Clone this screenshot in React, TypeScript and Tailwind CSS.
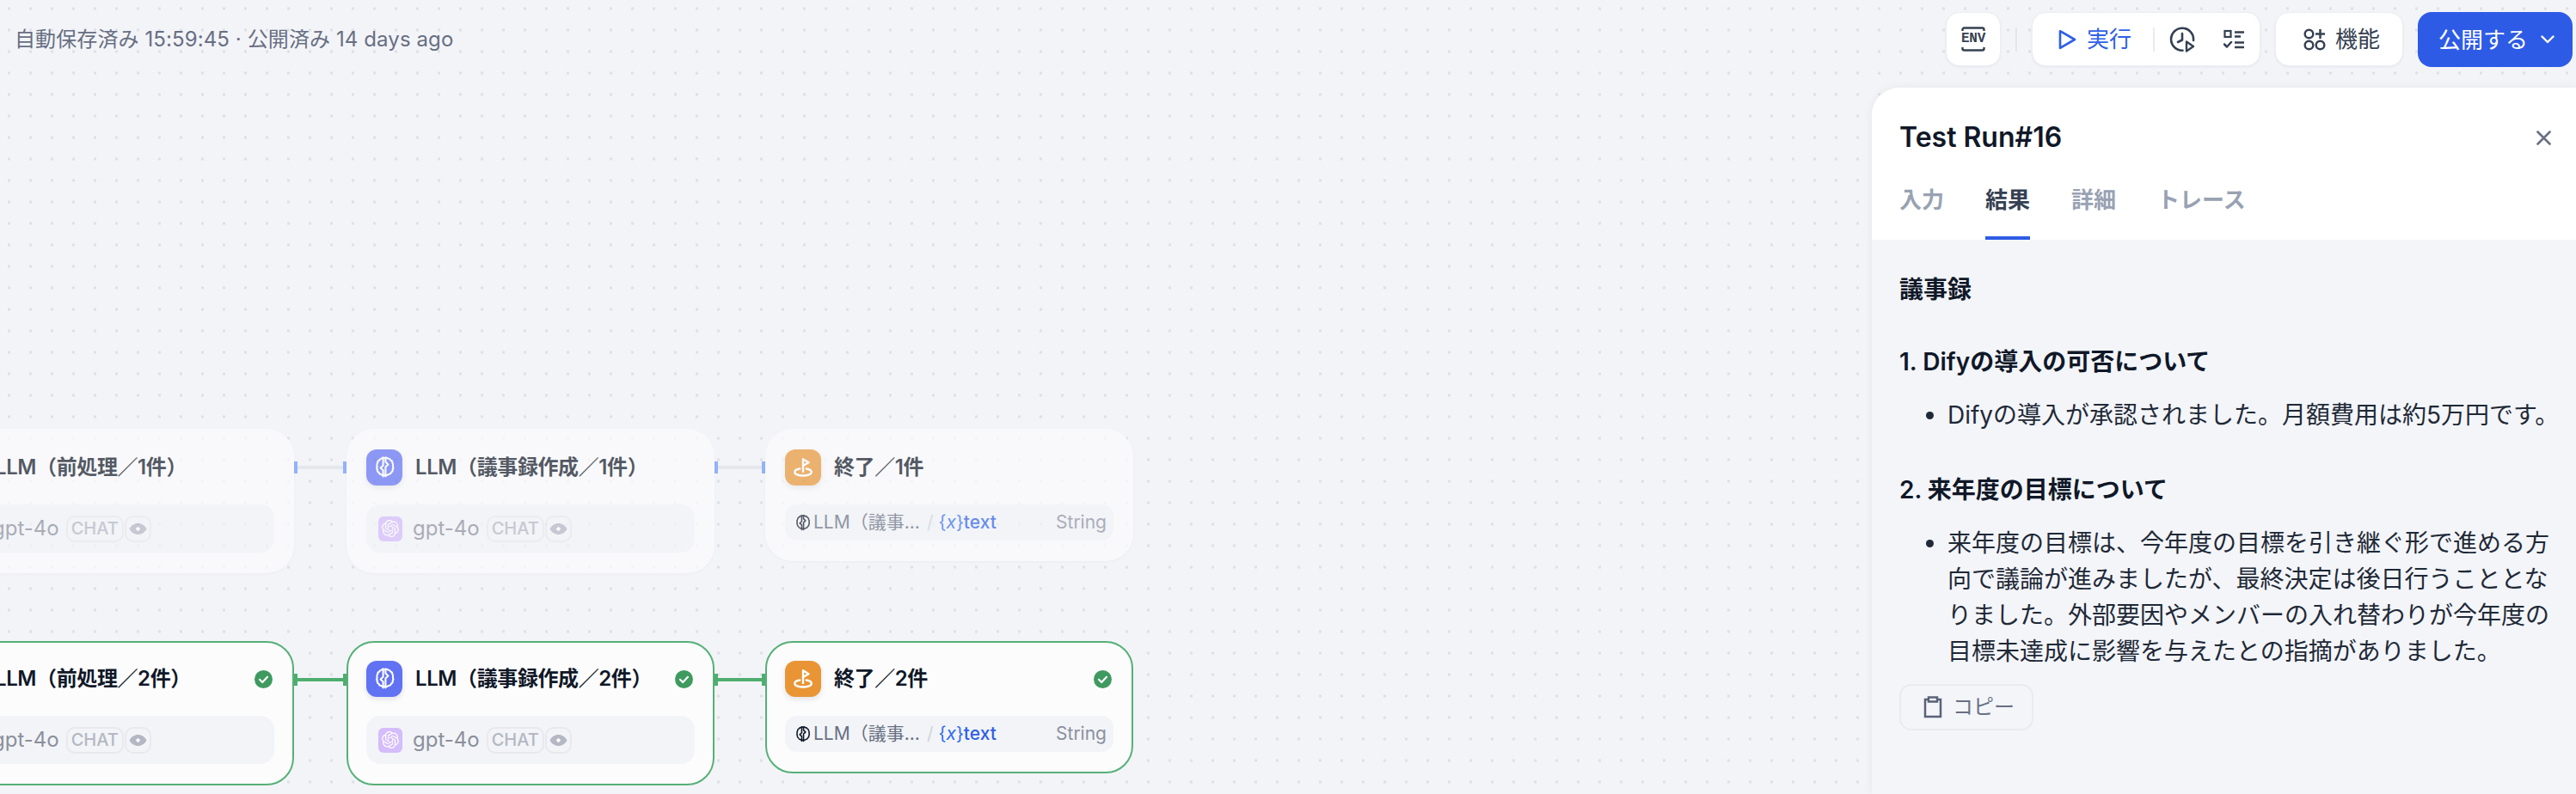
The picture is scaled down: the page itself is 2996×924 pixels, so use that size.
import React from "react";
import { SiOpenai } from "react-icons/si";

const BrainIcon = ({ className }: { className?: string }) => (
  <svg viewBox="0 0 24 24" fill="none" stroke="currentColor" strokeWidth="1.800" strokeLinecap="round" strokeLinejoin="round" className={className}>
    <path d="M12 2.500c1.200-.6 2.500-.4 3.400.5 1.200-.1 2.300.6 2.800 1.700 1.100.4 1.900 1.500 1.800 2.700.8.9 1 2.200.5 3.300.5 1 .5 2.300-.2 3.200.2 1.200-.4 2.400-1.500 3-.4 1.200-1.500 2-2.700 2-.9.9-2.200 1.200-3.400.7-1.200.5-2.500.3-3.500-.6-1.200 0-2.300-.8-2.700-2-1.100-.6-1.700-1.800-1.500-3-.7-1-.7-2.200-.2-3.300-.5-1.100-.3-2.400.5-3.300-.1-1.200.7-2.300 1.800-2.700.5-1.100 1.600-1.800 2.800-1.700C9.600 2.100 10.900 1.900 12 2.500z" />
    <path d="M10.800 3v7L8.200 12.500l2.600 2.300V21" />
    <path d="M13.200 3v3.500L15.800 9l-2.600 2.500V21" />
  </svg>
);

const FlagIcon = ({ className }: { className?: string }) => (
  <svg viewBox="0 0 24 24" fill="none" stroke="currentColor" strokeWidth="2.200" strokeLinecap="round" strokeLinejoin="round" className={className}>
    <path d="M12 16.500V3l6 3.600-6 3.600" />
    <path d="M8.500 13.400C5 14 3 15.300 3 17c0 2.100 4 3.800 9 3.800s9-1.700 9-3.800c0-1.700-2-3-5.500-3.600" />
  </svg>
);

const EyeIcon = () => (
  <svg viewBox="0 0 20 14" className="h-[15px] w-[21px] text-[#b4b8c4]">
    <path fill="currentColor" d="M0.500 7C2.500 3 6 .8 10 .8S17.500 3 19.500 7c-2 4-5.500 6.200-9.500 6.200S2.500 11 .500 7z" />
    <path fill="#fff" d="M10 4.300 12.600 7 10 9.700 7.400 7z" />
  </svg>
);

const Check = () => (
  <svg viewBox="0 0 21 21" className="h-[21px] w-[21px] shrink-0">
    <circle cx="10.500" cy="10.500" r="10.500" fill="#3f9a5f" />
    <path d="M6 10.800l3.200 3.200L15 7.800" fill="none" stroke="#fff" strokeWidth="2.200" strokeLinecap="round" strokeLinejoin="round" />
  </svg>
);

const Handle = ({ green }: { green?: boolean }) => (
  <div className={green ? "h-[14px] w-[4px] bg-[#4fae6f]" : "h-[14px] w-[4px] bg-[#7ba2fb]"} />
);

const Connector = ({ className, green }: { className: string; green?: boolean }) => (
  <div className={`absolute flex h-[14px] items-center ${className}`}>
    <Handle green={green} />
    <div className={green ? "h-[4px] flex-1 bg-[#4fae6f]" : "h-[4px] flex-1 bg-[#e1e4ea]"} />
    <Handle green={green} />
  </div>
);

const Shell = ({ className, done, children }: { className: string; done?: boolean; children: React.ReactNode }) => (
  <div
    className={`absolute box-border w-[428px] rounded-[32px] border-2 bg-[#fcfcfd] px-[21px] ${
      done
        ? "border-[#55b077] pt-[21px]"
        : "border-transparent pt-[22px] opacity-70 shadow-[0_1px_3px_rgba(16,24,40,0.04)]"
    } ${className}`}
  >
    {children}
  </div>
);

const Header = ({ icon, iconClass, title, done }: { icon: React.ReactNode; iconClass: string; title: string; done?: boolean }) => (
  <div className="flex h-[42px] items-center">
    <div className={`flex h-[42px] w-[42px] shrink-0 items-center justify-center rounded-[12px] text-white shadow-[0_3px_6px_rgba(16,24,40,0.10)] ${iconClass}`}>
      {icon}
    </div>
    <div className="ml-[15px] flex-1 whitespace-nowrap text-[24px] font-semibold leading-[32px] tracking-[-0.4px] text-[#101828]">{title}</div>
    {done && <div className="mr-[2px]"><Check /></div>}
  </div>
);

const LlmNode = ({ className, title, done }: { className: string; title: string; done?: boolean }) => (
  <Shell className={`h-[168px] ${className}`} done={done}>
    <Header icon={<BrainIcon className="h-[28px] w-[28px]" />} iconClass="bg-[#6172f3]" title={title} done={done} />
    <div className="mt-[22px] flex h-[56px] items-center rounded-[16px] bg-[#f2f4f7] pl-[14px]">
      <div className="flex h-[29px] w-[28px] items-center justify-center rounded-[6px] bg-[#d5bcfb] text-white">
        <SiOpenai size={20} />
      </div>
      <span className="ml-[12px] text-[24px] leading-[32px] text-[#8b8f9c]">gpt-4o</span>
      <span className="ml-[8px] flex h-[31px] w-[67px] items-center justify-center rounded-[10px] border-2 border-[#e7e9ee] text-[20px] font-medium text-[#b4b8c4]">CHAT</span>
      <span className="ml-[1px] flex h-[31px] w-[31px] items-center justify-center rounded-[10px] border-2 border-[#e7e9ee]"><EyeIcon /></span>
    </div>
  </Shell>
);

const EndNode = ({ className, title, done }: { className: string; title: string; done?: boolean }) => (
  <Shell className={`h-[154px] ${className}`} done={done}>
    <Header icon={<FlagIcon className="h-[26px] w-[26px]" />} iconClass="bg-[#e99536]" title={title} done={done} />
    <div className="mt-[22px] flex h-[42px] items-center rounded-[14px] bg-[#f2f4f7] pl-[10px] pr-[8px] text-[21px] leading-[28px]">
      <BrainIcon className="h-[21px] w-[21px] shrink-0 text-[#101828]" />
      <span className="ml-[2px] whitespace-nowrap text-[#676f83]">LLM（議事...</span>
      <span className="ml-[8px] text-[#d0d5dc]">/</span>
      <span className="ml-[6px] whitespace-nowrap text-[#2f6bf0]">{"{"}<i className="font-normal">x</i>{"}"}</span>
      <span className="font-medium text-[#2f5fe8]">text</span>
      <span className="ml-auto text-[#8a90a0]">String</span>
    </div>
  </Shell>
);

const PlayIcon = () => (
  <svg viewBox="0 0 21 24" fill="none" className="h-[24px] w-[21px]">
    <path d="M2 2.200 19 12 2 21.800z" stroke="#2f5fe8" strokeWidth="2.600" strokeLinejoin="round" />
  </svg>
);

const ClockPlay = () => (
  <svg viewBox="0 0 30 30" fill="none" className="h-[30px] w-[30px] text-[#354052]">
    <path d="M15.500 27.700A13 13 0 1 1 28 16" stroke="currentColor" strokeWidth="2.600" strokeLinecap="round" />
    <path d="M15 8v7.500l-5 2.500" stroke="currentColor" strokeWidth="2.600" strokeLinecap="round" strokeLinejoin="round" />
    <path d="M20 17.500 28 23 20 28.500z" stroke="currentColor" strokeWidth="2.400" strokeLinejoin="round" />
  </svg>
);

const ChecklistIcon = () => (
  <svg viewBox="0 0 24 24" fill="none" stroke="#354052" strokeWidth="2.500" className="h-[24px] w-[24px]">
    <rect x="1.500" y="2" width="7" height="7" strokeWidth="2.200" />
    <path d="M13 3.500h11M13 8.500h7M13 15.500h11M13 21h11" />
    <path d="M1 17.500l3 3 5-5.500" strokeLinecap="round" strokeLinejoin="round" />
  </svg>
);

const FeatureIcon = () => (
  <svg viewBox="0 0 26 26" fill="none" stroke="#354052" strokeWidth="2.500" className="h-[26px] w-[26px]">
    <circle cx="6.500" cy="6.500" r="4.800" />
    <circle cx="6.500" cy="19.500" r="4.800" />
    <circle cx="19.500" cy="19.500" r="4.800" />
    <path d="M19.500 1v11M14 6.500h11" />
  </svg>
);

const EnvIcon = () => (
  <div className="flex w-[30px] flex-col items-center text-[#354052]">
    <svg viewBox="0 0 28 5" fill="none" stroke="currentColor" strokeWidth="2.400" className="h-[5px] w-[28px]"><path d="M1.500 5V3.500a2 2 0 0 1 2-2h21a2 2 0 0 1 2 2V5" /></svg>
    <span className="my-[2px] text-[16px] font-bold leading-[15px] tracking-[-0.3px] [font-family:'Liberation_Mono',monospace]">ENV</span>
    <svg viewBox="0 0 28 5" fill="none" stroke="currentColor" strokeWidth="2.400" className="h-[5px] w-[28px]"><path d="M1.500 0v1.500a2 2 0 0 0 2 2h21a2 2 0 0 0 2-2V0" /></svg>
  </div>
);

const card = "flex h-[63px] items-center rounded-[16px] border border-[#eceef2] bg-white shadow-[0_1px_3px_rgba(16,24,40,0.06)]";

export default function App() {
  return (
    <div className="relative h-[924px] w-[2996px] overflow-hidden bg-[#f3f4f8] bg-[radial-gradient(circle,#dde0e6_1.6px,transparent_1.8px)] bg-[length:25px_25px] bg-[position:-2px_-2.5px] [font-family:Inter,'Noto_Sans_CJK_JP',sans-serif]">
      <LlmNode className="left-[-86px] top-[499px]" title="LLM（前処理／1件）" />
      <LlmNode className="left-[403px] top-[499px]" title="LLM（議事録作成／1件）" />
      <EndNode className="left-[890px] top-[499px]" title="終了／1件" />
      <Connector className="left-[342px] top-[537px] w-[61px] opacity-80" />
      <Connector className="left-[831px] top-[537px] w-[59px] opacity-80" />

      <LlmNode className="left-[-86px] top-[746px]" title="LLM（前処理／2件）" done />
      <LlmNode className="left-[403px] top-[746px]" title="LLM（議事録作成／2件）" done />
      <EndNode className="left-[890px] top-[746px]" title="終了／2件" done />
      <Connector className="left-[342px] top-[784px] w-[61px]" green />
      <Connector className="left-[831px] top-[784px] w-[59px]" green />

      <header className="flex items-start justify-between pl-[17px] pr-[4px] pt-[14px]">
        <div className="flex h-[63px] items-center text-[24px] leading-[32px] tracking-[0.1px] text-[#676f83]">自動保存済み 15:59:45 · 公開済み 14 days ago</div>
        <div className="flex items-start">
          <div className={`${card} w-[64px] justify-center`}><EnvIcon /></div>
          <div className="mx-[17px] mt-[18px] h-[28px] w-[2px] bg-[#e4e6ea]" />
          <div className={`${card} w-[266px] pl-[30px]`}>
            <PlayIcon />
            <span className="ml-[12px] text-[26px] text-[#2f5fe8]">実行</span>
            <div className="ml-[25px] h-[28px] w-[2px] bg-[#e9ebef]" />
            <div className="ml-[17px]"><ClockPlay /></div>
            <div className="ml-[33px]"><ChecklistIcon /></div>
          </div>
          <div className={`${card} ml-[17px] w-[149px] pl-[32px]`}>
            <FeatureIcon />
            <span className="ml-[11px] text-[26px] text-[#354052]">機能</span>
          </div>
          <div className="ml-[17px] flex h-[64px] w-[180px] items-center rounded-[16px] bg-[#2e5be6] pl-[24px] text-white">
            <span className="text-[26px]">公開する</span>
            <svg viewBox="0 0 16 10" fill="none" stroke="#fff" strokeWidth="2.400" strokeLinecap="round" strokeLinejoin="round" className="ml-[15px] h-[10px] w-[16px]"><path d="M1.500 1.500 8 8l6.500-6.500" /></svg>
          </div>
        </div>
      </header>

      <aside className="absolute bottom-0 right-0 top-[102px] flex w-[819px] flex-col overflow-hidden rounded-tl-[32px] bg-[#f3f5f9] shadow-[0_0_12px_rgba(16,24,40,0.06)]">
        <div className="h-[177px] shrink-0 bg-white pt-[34px]">
          <div className="flex h-[48px] items-center justify-between pl-[32px] pr-[29px]">
            <h1 className="text-[32px] font-semibold leading-[48px] text-[#101828]">Test Run#16</h1>
            <svg viewBox="0 0 17 17" fill="none" stroke="#676f83" strokeWidth="2.600" strokeLinecap="round" className="h-[17px] w-[17px]"><path d="M1.500 1.500l14 14M15.500 1.500l-14 14" /></svg>
          </div>
          <nav className="mt-[31px] flex gap-[48px] pl-[32px] text-[26px] font-semibold leading-[36px]">
            <span className="border-b-4 border-transparent pb-[24px] text-[#98a2b3]">入力</span>
            <span className="border-b-4 border-[#2e5be6] pb-[24px] text-[#354052]">結果</span>
            <span className="border-b-4 border-transparent pb-[24px] text-[#98a2b3]">詳細</span>
            <span className="border-b-4 border-transparent pb-[24px] text-[#98a2b3]">トレース</span>
          </nav>
        </div>
        <div className="pl-[32px] pr-[10px] pt-[37px] text-[28px] leading-[42px] text-[#1f2937]">
          <h2 className="font-semibold text-[#101828]">議事録</h2>
          <h3 className="mt-[42px] font-semibold text-[#101828]">1. Difyの導入の可否について</h3>
          <ul className="mt-[20px] list-disc pl-[56px]">
            <li>Difyの導入が承認されました。月額費用は約5万円です。</li>
          </ul>
          <h3 className="mt-[45px] font-semibold text-[#101828]">2. 来年度の目標について</h3>
          <ul className="mt-[20px] list-disc pl-[56px]">
            <li>来年度の目標は、今年度の目標を引き継ぐ形で進める方向で議論が進みましたが、最終決定は後日行うこととなりました。外部要因やメンバーの入れ替わりが今年度の目標未達成に影響を与えたとの指摘がありました。</li>
          </ul>
          <button className="mt-[17px] flex h-[54px] w-[156px] items-center rounded-[14px] border-2 border-[#e9ebf0] pl-[26px] text-[24px] leading-[32px] text-[#676f83]">
            <svg viewBox="0 0 22 26" fill="none" stroke="#596378" strokeWidth="2.500" className="h-[26px] w-[22px] shrink-0"><path d="M6 4H2v20h18V4h-4" /><path d="M6 1.500h10v5H6z" /></svg>
            <span className="ml-[12px]">コピー</span>
          </button>
        </div>
      </aside>
    </div>
  );
}
